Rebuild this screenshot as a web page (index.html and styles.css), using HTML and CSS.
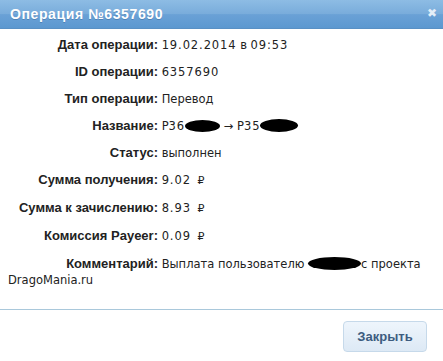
FILE: index.html
```html
<!DOCTYPE html>
<html>
    <head>
        <title>Операция №6357690</title>
        <link rel="stylesheet" href="styles.css">
    </head>
    <body>
        <div class="dialog">
            <div class="titlebar">
                <span class="title">Операция №6357690</span>
                <span class="close">&#10006;</span>
            </div>

            <div class="content">
                <div class="row"><span class="label">Дата операции:</span> <span class="num">19.02.2014</span> в <span class="num">09:53</span></div>
                <div class="row"><span class="label">ID операции:</span> <span class="num">6357690</span></div>
                <div class="row"><span class="label">Тип операции:</span> Перевод</div>
                <div class="row"><span class="label">Название:</span> P<span class="num">36</span><span class="blot blot-a"></span> → P<span class="num">35</span><span class="blot blot-b"></span></div>
                <div class="row"><span class="label">Статус:</span> выполнен</div>
                <div class="row"><span class="label">Сумма получения:</span> <span class="num">9.02</span> <span class="rub">₽</span></div>
                <div class="row"><span class="label">Сумма к зачислению:</span> <span class="num">8.93</span> <span class="rub">₽</span></div>
                <div class="row"><span class="label">Комиссия Payeer:</span> <span class="num">0.09</span> <span class="rub">₽</span></div>
                <div class="row"><span class="label">Комментарий:</span> Выплата пользователю <span class="blot blot-c"></span>с проекта DragoMania.ru</div>
            </div>

            <div class="footer">
                <button class="btn">Закрыть</button>
            </div>
        </div>
    </body>
</html>
```

FILE: styles.css
```css
body {
    margin: 0;
    background-color: #fff;
    font-family: "DejaVu Sans", Verdana, sans-serif;
    color: #222;
}
.dialog {
    width: 443px;
    height: 361px;
    display: flex;
    flex-direction: column;
}
.titlebar {
    height: 28px;
    display: flex;
    align-items: center;
    justify-content: space-between;
    padding: 0 6px 0 10px;
    background: linear-gradient(#8dbce4, #79acdb 50%, #6aa1d6 52%, #5c98d0);
    border-bottom: 1px solid #5990c4;
}
.title {
    font-family: "Liberation Sans", Arial, sans-serif;
    font-weight: bold;
    font-size: 14px;
    letter-spacing: 0.6px;
    color: #fff;
    text-shadow: 0 1px 0 rgba(40, 80, 130, 0.35);
}
.close {
    font-size: 12px;
    color: #e4eef8;
    padding: 0 0 2px 0;
}
.content {
    flex: 1;
    padding: 8px 8px 0 8px;
    font-size: 11.5px;
    line-height: 16px;
}
.row {
    margin-bottom: 11px;
}
.label {
    display: inline-block;
    width: 150px;
    text-align: right;
    font-family: "Liberation Sans", Arial, sans-serif;
    font-weight: bold;
    font-size: 13px;
}
.num {
    letter-spacing: 0.9px;
}
.rub {
    font-size: 11px;
    margin-left: 3px;
}
.blot {
    display: inline-block;
    background-color: #000;
    border-radius: 50%;
    vertical-align: -2px;
    height: 12px;
}
.blot-a {
    width: 35px;
}
.blot-b {
    width: 38px;
    height: 13px;
}
.blot-c {
    width: 53px;
    height: 13px;
}
.footer {
    border-top: 1px solid #a9c8db;
    padding: 11px 16px 9px 0;
    display: flex;
    justify-content: flex-end;
}
.btn {
    height: 31px;
    width: 84px;
    border: 1px solid #c6d9ea;
    border-radius: 4px;
    background: linear-gradient(#eef5fc, #dde9f5);
    font-family: "Liberation Sans", Arial, sans-serif;
    font-weight: bold;
    font-size: 13px;
    color: #3d5c80;
}
```
